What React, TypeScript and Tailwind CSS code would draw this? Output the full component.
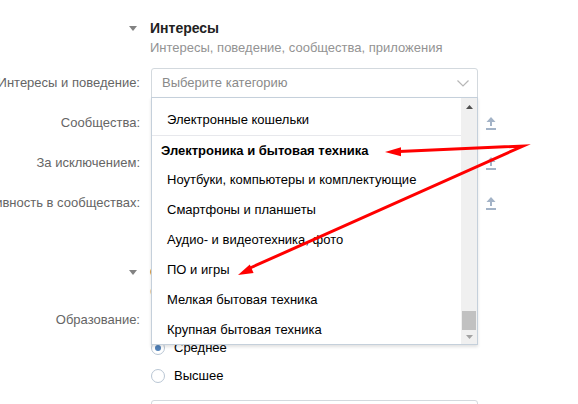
import React from "react";

const ITEMS: { text: string; group?: boolean }[] = [
  { text: "Кредиты и займы" },
  { text: "Электронные кошельки" },
  { text: "Электроника и бытовая техника", group: true },
  { text: "Ноутбуки, компьютеры и комплектующие" },
  { text: "Смартфоны и планшеты" },
  { text: "Аудио- и видеотехника, фото" },
  { text: "ПО и игры" },
  { text: "Мелкая бытовая техника" },
  { text: "Крупная бытовая техника" },
];

function Triangle() {
  return (
    <svg width="8" height="5" viewBox="0 0 8 5">
      <path d="M0 0H8L4 5Z" fill="#828282" />
    </svg>
  );
}

function UploadIcon() {
  return (
    <svg width="10" height="13" viewBox="0 0 10 13">
      <path d="M5 0L9.5 5H0.5Z" fill="#a3b3c7" />
      <rect x="4" y="4" width="2" height="5" fill="#a3b3c7" />
      <rect x="0" y="11" width="10" height="2" fill="#a3b3c7" />
    </svg>
  );
}

function Chevron() {
  return (
    <svg width="12" height="7" viewBox="0 0 12 7">
      <path d="M0.5 0.5L6 6L11.5 0.5" fill="none" stroke="#b7b7b7" strokeWidth="1.2" />
    </svg>
  );
}

function SectionHeader({ title, subtitle }: { title: string; subtitle: string }) {
  return (
    <div className="flex">
      <div className="flex h-[18px] w-[140px] shrink-0 items-center justify-end pr-[3px]">
        <Triangle />
      </div>
      <div className="ml-[10px]">
        <div className="h-[18px] text-[14px] leading-[18px] font-bold text-[#222]">{title}</div>
        <div className="mt-[3px] leading-[16px] text-[#939393]">{subtitle}</div>
      </div>
    </div>
  );
}

function Label({ children }: { children?: React.ReactNode }) {
  return (
    <div className="flex w-[140px] shrink-0 justify-end">
      <span className="shrink-0 whitespace-nowrap text-[#656565]">{children}</span>
    </div>
  );
}

function InputRow({ label }: { label: string }) {
  return (
    <div className="mt-[10px] flex h-[30px] items-center">
      <Label>{label}</Label>
      <div className="ml-[11px] h-full w-[327px] rounded-[3px] border border-[#d3d9de] bg-white" />
      <div className="ml-[8px] flex">
        <UploadIcon />
      </div>
    </div>
  );
}

function Radio({ label, checked }: { label: string; checked?: boolean }) {
  return (
    <div className="flex h-[28px] items-center">
      <span className="flex h-[14px] w-[14px] items-center justify-center rounded-full border border-[#b9c6d4] bg-white">
        {checked && <span className="h-[6px] w-[6px] rounded-full bg-[#5181b8]" />}
      </span>
      <span className="ml-[9px] text-[#000]">{label}</span>
    </div>
  );
}

function Dropdown() {
  return (
    <div className="absolute top-[29px] left-0 z-10 flex h-[248px] w-[327px] border border-[#c5d0db] bg-white shadow-[0_2px_3px_rgba(0,0,0,0.12)]">
      <div className="flex-1 overflow-hidden">
        <div className="-mt-[23px]">
          {ITEMS.map((item) =>
            item.group ? (
              <div
                key={item.text}
                className="flex h-[30px] items-center border-t border-[#e7e8ec] pl-[9px] font-bold text-[#000]"
              >
                {item.text}
              </div>
            ) : (
              <div key={item.text} className="flex h-[30px] items-center pl-[15px] text-[#000]">
                {item.text}
              </div>
            )
          )}
        </div>
      </div>
      <div className="flex w-[16px] flex-col bg-[#f0f0f0]">
        <div className="flex h-[17px] items-center justify-center">
          <svg width="7" height="4" viewBox="0 0 7 4">
            <path d="M0 4L3.5 0L7 4Z" fill="#505050" />
          </svg>
        </div>
        <div className="flex flex-1 flex-col justify-end px-[1px]">
          <div className="h-[19px] bg-[#c1c1c1]" />
        </div>
        <div className="flex h-[14px] items-center justify-center">
          <svg width="7" height="4" viewBox="0 0 7 4">
            <path d="M0 0H7L3.5 4Z" fill="#a3a3a3" />
          </svg>
        </div>
      </div>
    </div>
  );
}

export default function App() {
  return (
    <div className="relative h-[404px] w-[578px] overflow-hidden bg-white font-['Liberation_Sans',Arial,sans-serif] text-[13px]">
      <div className="pt-[19px]">
        <SectionHeader title="Интересы" subtitle="Интересы, поведение, сообщества, приложения" />

        {/* Category select with its open list */}
        <div className="mt-[12px] flex h-[30px] items-center">
          <Label>Интересы и поведение:</Label>
          <div className="relative ml-[11px] h-full w-[327px]">
            <div className="flex h-full items-center justify-between rounded-t-[3px] border border-[#d3d9de] bg-white pr-[8px] pl-[10px]">
              <span className="text-[#8a8a8a]">Выберите категорию</span>
              <Chevron />
            </div>
            <Dropdown />
          </div>
        </div>

        <InputRow label="Сообщества:" />
        <InputRow label="За исключением:" />
        <InputRow label="Активность в сообществах:" />

        <div className="mt-[45px]">
          <SectionHeader title="Образование и работа" subtitle="Образование, должность" />
        </div>

        <div className="mt-[6px] flex">
          <div className="flex h-[28px] items-center">
            <Label>Образование:</Label>
          </div>
          <div className="ml-[11px] flex flex-col">
            <Radio label="Любое" />
            <Radio label="Среднее" checked />
            <Radio label="Высшее" />
          </div>
        </div>

        <div className="mt-[10px] flex h-[30px]">
          <Label />
          <div className="ml-[11px] h-full w-[327px] rounded-[3px] border border-[#d3d9de] bg-white" />
        </div>
      </div>

      {/* red annotation arrows */}
      <svg className="pointer-events-none absolute top-0 left-0 z-20" width="578" height="404" viewBox="0 0 578 404">
        <polyline
          points="399,151.5 523,146 250,268"
          fill="none"
          stroke="#ff0000"
          strokeWidth="3"
          strokeLinejoin="miter"
          strokeMiterlimit="20"
        />
        <polygon points="385,152 401,147.3 401,156.3" fill="#ff0000" />
        <polygon points="238,275 253.6,273 249.8,264.6" fill="#ff0000" />
      </svg>
    </div>
  );
}
